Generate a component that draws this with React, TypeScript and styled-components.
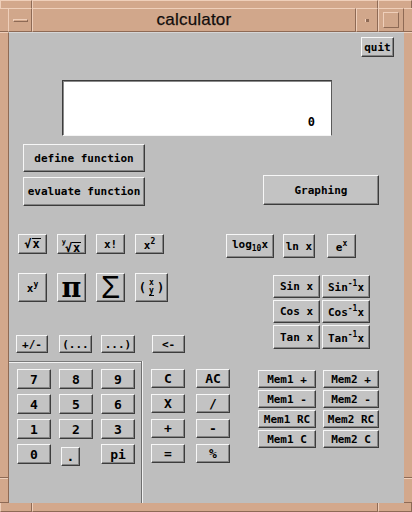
import React from 'react'
import styled, { createGlobalStyle } from 'styled-components'

const tan = '#d3a88c'
const frameLight = '#efcfba'
const frameDark = '#8e6a55'
const face = '#c3c3c3'

const GlobalStyle = createGlobalStyle`
  html, body {
    margin: 0;
    padding: 0;
    background: ${tan};
  }
  #root {
    width: 412px;
    height: 512px;
  }
`

const Window = styled.div`
  width: 412px;
  height: 512px;
  display: flex;
  flex-direction: column;
  background: ${tan};
  overflow: hidden;
`

const Edge = styled.div<{ $h: number }>`
  height: ${(p) => p.$h}px;
  display: flex;
  flex-shrink: 0;
`

const EdgeSeg = styled.div<{ $w?: number; $bottom?: boolean }>`
  ${(p) => (p.$w ? `width: ${p.$w}px; flex-shrink: 0;` : 'flex: 1;')}
  box-sizing: border-box;
  border-left: 1px solid ${frameLight};
  border-right: 1px solid ${frameDark};
  ${(p) =>
    p.$bottom
      ? `border-bottom: 1px solid ${frameDark};`
      : `border-top: 1px solid ${frameLight};`}
`

const Middle = styled.div`
  flex: 1;
  display: flex;
  min-height: 0;
`

const Side = styled.div`
  width: 8px;
  flex-shrink: 0;
  display: flex;
  flex-direction: column;
`

const SideSeg = styled.div<{ $h?: number }>`
  ${(p) => (p.$h ? `height: ${p.$h}px; flex-shrink: 0;` : 'flex: 1;')}
  box-sizing: border-box;
  border-top: 1px solid ${frameLight};
  border-bottom: 1px solid ${frameDark};
`

const Inner = styled.div`
  flex: 1;
  display: flex;
  flex-direction: column;
  min-width: 0;
`

const TitleBar = styled.div`
  height: 24px;
  display: flex;
  flex-shrink: 0;
`

const TitleCell = styled.div<{ $w?: number }>`
  ${(p) => (p.$w ? `width: ${p.$w}px; flex-shrink: 0;` : 'flex: 1;')}
  box-sizing: border-box;
  border: 1px solid;
  border-color: ${frameLight} ${frameDark} ${frameDark} ${frameLight};
  background: #d1a78b;
  display: flex;
  align-items: center;
  justify-content: center;
`

const Title = styled.span`
  font-family: 'Liberation Sans', Arial, sans-serif;
  font-size: 17px;
  color: #120d0b;
  letter-spacing: 0.2px;
  -webkit-text-stroke: 0.25px #120d0b;
`

const MenuBar = styled.div`
  width: 15px;
  height: 3px;
  box-sizing: border-box;
  border: 1px solid;
  border-color: ${frameLight} ${frameDark} ${frameDark} ${frameLight};
`

const MinDot = styled.div`
  width: 3px;
  height: 3px;
  background: ${frameDark};
  border-left: 1px solid ${frameLight};
`

const MaxBox = styled.div`
  width: 16px;
  height: 16px;
  box-sizing: border-box;
  border: 1px solid;
  border-color: ${frameLight} ${frameDark} ${frameDark} ${frameLight};
`

const Content = styled.div`
  flex: 1;
  display: flex;
  flex-direction: column;
  background: #bebebe;
  border-left: 1px solid ${frameDark};
  border-top: 1px solid #d6d6d6;
  font-family: 'DejaVu Sans Mono', monospace;
  min-height: 0;
`

const Btn = styled.button<{ $w: number; $h: number; $big?: boolean }>`
  width: ${(p) => p.$w}px;
  height: ${(p) => p.$h}px;
  flex-shrink: 0;
  box-sizing: border-box;
  margin: 0;
  padding: 0;
  background: ${face};
  border: 1px solid;
  border-color: #f7f7f7 #3c3c3c #3c3c3c #f7f7f7;
  box-shadow: inset -1px -1px 0 #858585;
  color: #000;
  font-family: 'DejaVu Sans Mono', monospace;
  font-weight: bold;
  font-size: ${(p) => (p.$big ? 13 : 11)}px;
  line-height: 1;
  white-space: nowrap;
  display: inline-flex;
  align-items: center;
  justify-content: center;
  cursor: pointer;
`

const Label = styled.span`
  white-space: nowrap;
  line-height: 1;
`

type KeyProps = { w: number; h: number; big?: boolean; children: React.ReactNode }

function Key({ w, h, big, children }: KeyProps) {
  return (
    <Btn $w={w} $h={h} $big={big}>
      <Label>{children}</Label>
    </Btn>
  )
}

const QuitRow = styled.div`
  display: flex;
  justify-content: flex-end;
  margin-top: 4px;
  padding-right: 10px;
`

const Display = styled.div`
  margin: 23px 0 0 53px;
  width: 270px;
  height: 56px;
  box-sizing: border-box;
  background: #fff;
  border: 1px solid;
  border-color: #3c3c3c #5a5a5a #f4f4f4 #3c3c3c;
  box-shadow: inset 1px 1px 0 #8a8a8a;
  display: flex;
  align-items: flex-end;
  justify-content: flex-end;
  padding: 0 16px 6px 0;
  font-weight: bold;
  font-size: 12px;
  color: #000;
`

const FuncSection = styled.div`
  display: flex;
  align-items: flex-end;
  margin-top: 8px;
  padding-left: 14px;
`

const FuncCol = styled.div`
  display: flex;
  flex-direction: column;
  gap: 5px;
`

const GraphSlot = styled.div`
  margin: 0 0 1px 118px;
`

const MidSection = styled.div`
  display: flex;
  margin-top: 28px;
`

const SciCol = styled.div`
  width: 217px;
  flex-shrink: 0;
  box-sizing: border-box;
  padding-left: 7px;
  display: flex;
  flex-direction: column;
`

const SciRow = styled.div<{ $top?: number }>`
  display: flex;
  gap: 10px;
  padding-left: 2px;
  margin-top: ${(p) => p.$top || 0}px;
`

const EditRow = styled.div`
  display: flex;
  align-items: center;
  margin-top: 33px;
`

const Spacer = styled.div<{ $w: number }>`
  width: ${(p) => p.$w}px;
  flex-shrink: 0;
`

const FnCol = styled.div`
  display: flex;
  flex-direction: column;
`

const LogRow = styled.div`
  display: flex;
`

const TrigGrid = styled.div`
  margin: 17px 0 0 47px;
  display: grid;
  grid-template-columns: 47px 48px;
  grid-auto-rows: 23px;
  gap: 2px;
`

const Keypad = styled.div`
  flex: 1;
  display: flex;
  margin-top: 8px;
`

const DigitsPanel = styled.div`
  width: 133px;
  flex-shrink: 0;
  box-sizing: border-box;
  border-top: 1px solid #7a7a7a;
  border-right: 1px solid #6e6e6e;
  box-shadow: inset 0 1px 0 #f2f2f2, 1px 0 0 #f2f2f2;
  padding: 7px 0 0 8px;
`

const KeyGrid = styled.div<{ $cols: string; $row: number; $gap: string }>`
  display: grid;
  grid-template-columns: ${(p) => p.$cols};
  grid-auto-rows: ${(p) => p.$row}px;
  gap: ${(p) => p.$gap};
`

const DotSlot = styled.div`
  padding: 2px 0 0 2px;
`

const OpsPanel = styled.div`
  padding: 8px 0 0 9px;
  display: flex;
  align-items: flex-start;
`

const MemSlot = styled.div`
  margin-left: 28px;
  padding-top: 1px;
`

const Sup = styled.span`
  font-size: 8px;
  vertical-align: 5px;
`

const Sub = styled.span`
  font-size: 8px;
  vertical-align: -3px;
`

const Radical = styled.span`
  display: inline-flex;
  align-items: flex-end;
  font-size: 12px;
`

const RadIndex = styled.span`
  font-size: 7px;
  line-height: 7px;
  align-self: flex-start;
  margin: -3px -1px 0 0;
`

const Overline = styled.span`
  border-top: 1px solid #000;
  padding: 0 1px;
  line-height: 11px;
`

const BigGlyph = styled.span<{ $serif?: boolean }>`
  display: inline-block;
  font-family: ${(p) =>
    p.$serif ? "'DejaVu Serif', serif" : "'Liberation Sans', Arial, sans-serif"};
  font-weight: ${(p) => (p.$serif ? 'bold' : 'normal')};
  font-size: ${(p) => (p.$serif ? 27 : 31)}px;
  line-height: 1;
`

const Frac = styled.span`
  display: inline-flex;
  flex-direction: column;
  align-items: center;
  vertical-align: middle;
  font-size: 8px;
  line-height: 8px;
  margin: 0 3px;
`

const FracBottom = styled.span`
  border-bottom: 1px solid #000;
`

const Paren = styled.span`
  font-size: 12px;
  vertical-align: middle;
`

const digits = ['7', '8', '9', '4', '5', '6', '1', '2', '3', '0']
const ops = ['C', 'AC', 'X', '/', '+', '-', '=', '%']
const mems = ['+', '-', 'RC', 'C']

function Inv({ fn }: { fn: string }) {
  return (
    <>
      {fn}
      <Sup>-1</Sup>x
    </>
  )
}

export default function App() {
  return (
    <>
      <GlobalStyle />
      <Window>
        <Edge $h={8}>
          <EdgeSeg $w={32} />
          <EdgeSeg />
          <EdgeSeg $w={34} />
        </Edge>
        <Middle>
          <Side>
            <SideSeg $h={24} />
            <SideSeg />
            <SideSeg $h={25} />
          </Side>
          <Inner>
            <TitleBar>
              <TitleCell $w={24}>
                <MenuBar />
              </TitleCell>
              <TitleCell>
                <Title>calculator</Title>
              </TitleCell>
              <TitleCell $w={22}>
                <MinDot />
              </TitleCell>
              <TitleCell $w={26}>
                <MaxBox />
              </TitleCell>
            </TitleBar>
            <Content>
              <QuitRow>
                <Key w={33} h={20}>quit</Key>
              </QuitRow>
              <Display>0</Display>

              <FuncSection>
                <FuncCol>
                  <Key w={122} h={28}>define function</Key>
                  <Key w={122} h={29}>evaluate function</Key>
                </FuncCol>
                <GraphSlot>
                  <Key w={116} h={30}>Graphing</Key>
                </GraphSlot>
              </FuncSection>

              <MidSection>
                <SciCol>
                  <SciRow>
                    <Key w={29} h={20}>
                      <Radical>
                        √<Overline>x</Overline>
                      </Radical>
                    </Key>
                    <Key w={29} h={20}>
                      <Radical>
                        <RadIndex>y</RadIndex>√<Overline>x</Overline>
                      </Radical>
                    </Key>
                    <Key w={29} h={20}>x!</Key>
                    <Key w={29} h={20}>
                      x<Sup>2</Sup>
                    </Key>
                  </SciRow>
                  <SciRow $top={19}>
                    <Key w={29} h={29}>
                      x<Sup>y</Sup>
                    </Key>
                    <Btn $w={29} $h={29}>
                      <BigGlyph $serif>π</BigGlyph>
                    </Btn>
                    <Btn $w={29} $h={29}>
                      <BigGlyph>Σ</BigGlyph>
                    </Btn>
                    <Key w={33} h={29}>
                      <Paren>(</Paren>
                      <Frac>
                        <span>x</span>
                        <FracBottom>y</FracBottom>
                      </Frac>
                      <Paren>)</Paren>
                    </Key>
                  </SciRow>
                  <EditRow>
                    <Key w={32} h={18}>+/-</Key>
                    <Spacer $w={11} />
                    <Key w={33} h={18}>(...</Key>
                    <Spacer $w={9} />
                    <Key w={34} h={18}>...)</Key>
                    <Spacer $w={17} />
                    <Key w={33} h={18}>&lt;-</Key>
                  </EditRow>
                </SciCol>

                <FnCol>
                  <LogRow>
                    <Key w={48} h={24}>
                      log<Sub>10</Sub>x
                    </Key>
                    <Spacer $w={9} />
                    <Key w={32} h={24}>ln x</Key>
                    <Spacer $w={12} />
                    <Key w={29} h={24}>
                      e<Sup>x</Sup>
                    </Key>
                  </LogRow>
                  <TrigGrid>
                    <Key w={47} h={23}>Sin x</Key>
                    <Key w={48} h={23}>
                      <Inv fn="Sin" />
                    </Key>
                    <Key w={47} h={23}>Cos x</Key>
                    <Key w={48} h={23}>
                      <Inv fn="Cos" />
                    </Key>
                    <Key w={47} h={24}>Tan x</Key>
                    <Key w={48} h={24}>
                      <Inv fn="Tan" />
                    </Key>
                  </TrigGrid>
                </FnCol>
              </MidSection>

              <Keypad>
                <DigitsPanel>
                  <KeyGrid $cols="34px 34px 34px" $row={20} $gap="5px 8px">
                    {digits.map((d) => (
                      <Key key={d} w={34} h={20} big>
                        {d}
                      </Key>
                    ))}
                    <DotSlot>
                      <Key w={19} h={19} big>.</Key>
                    </DotSlot>
                    <Key w={34} h={20} big>pi</Key>
                  </KeyGrid>
                </DigitsPanel>
                <OpsPanel>
                  <KeyGrid $cols="34px 34px" $row={19} $gap="6px 11px">
                    {ops.map((o) => (
                      <Key key={o} w={34} h={19} big>
                        {o}
                      </Key>
                    ))}
                  </KeyGrid>
                  <MemSlot>
                    <KeyGrid $cols="58px 56px" $row={18} $gap="2px 7px">
                      {mems.map((m) =>
                        [1, 2].map((n) => (
                          <Key key={m + n} w={n === 1 ? 58 : 56} h={18}>
                            {`Mem${n} ${m}`}
                          </Key>
                        )),
                      )}
                    </KeyGrid>
                  </MemSlot>
                </OpsPanel>
              </Keypad>
            </Content>
          </Inner>
          <Side>
            <SideSeg $h={24} />
            <SideSeg />
            <SideSeg $h={25} />
          </Side>
        </Middle>
        <Edge $h={9}>
          <EdgeSeg $w={32} $bottom />
          <EdgeSeg $bottom />
          <EdgeSeg $w={34} $bottom />
        </Edge>
      </Window>
    </>
  )
}
